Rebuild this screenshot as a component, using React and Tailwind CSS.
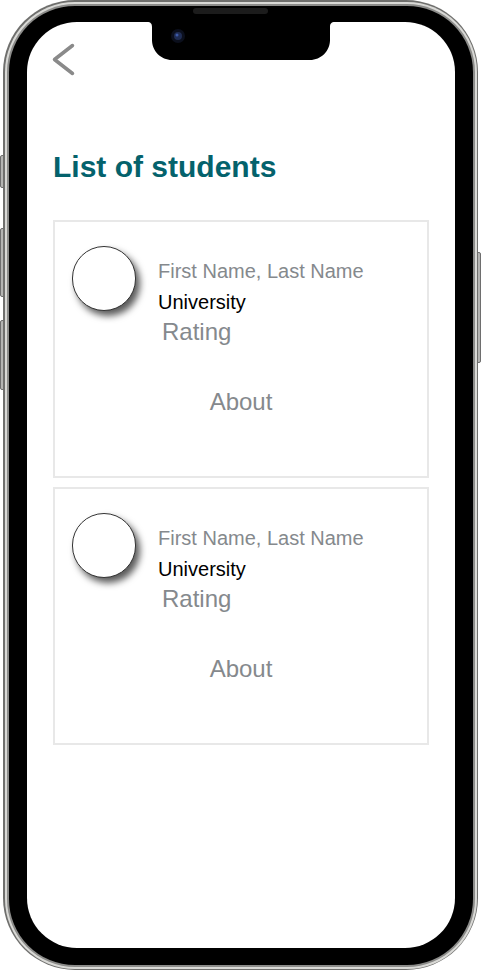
import React from "react";

const students = [
  { name: "First Name, Last Name", university: "University", rating: "Rating" },
  { name: "First Name, Last Name", university: "University", rating: "Rating" },
];

function StudentCard({ student }) {
  return (
    <div className="h-[258px] border-2 border-[#e8e8e8] bg-white pt-[24px] pl-[17px]">
      <div className="flex items-start">
        <div className="w-[64px] h-[65px] shrink-0 rounded-full border border-[#333] bg-white shadow-[4px_5px_7px_rgba(0,0,0,0.65)]" />
        <div className="ml-[22px] mt-[15px] flex flex-col">
          <span className="text-[20px] leading-none text-[#85898d]">{student.name}</span>
          <span className="mt-[11px] text-[20px] leading-none text-black">{student.university}</span>
          <span className="mt-[8px] ml-[4px] text-[24px] leading-none text-[#85898d]">{student.rating}</span>
        </div>
      </div>
      <div className="mt-[46px] pr-[17px] text-center text-[24px] leading-none text-[#85898d]">About</div>
    </div>
  );
}

export default function App() {
  return (
    <div className="relative w-[481px] h-[972px] bg-white font-['Liberation_Sans',Arial,sans-serif]">
      {/* side buttons */}
      <div className="absolute left-0 top-[155px] w-[5px] h-[33px] rounded-l-[2px] bg-[#b5b5b3] border border-[#6e6e6e]" />
      <div className="absolute left-0 top-[228px] w-[5px] h-[69px] rounded-l-[2px] bg-[#b5b5b3] border border-[#6e6e6e]" />
      <div className="absolute left-0 top-[320px] w-[5px] h-[70px] rounded-l-[2px] bg-[#b5b5b3] border border-[#6e6e6e]" />
      <div className="absolute right-0 top-[252px] w-[5px] h-[111px] rounded-r-[2px] bg-[#b5b5b3] border border-[#6e6e6e]" />

      <div className="relative ml-[3px] w-[475px] h-[970px] rounded-[72px] bg-[#6f6f6d] p-[1.5px]">
        <div className="h-full rounded-[70px] bg-[#d9d9d6] p-[2px]">
          <div className="h-full rounded-[68px] bg-[#8c8c8a] p-[2px]">
            <div className="relative h-full rounded-[66px] bg-black pl-[18.5px] pr-[17.5px] pt-[16.5px] pb-[16.5px]">
              {/* speaker */}
              <div className="absolute left-[184.5px] top-[2.5px] w-[75px] h-[6px] rounded-full bg-[#1c1c1c]" />

              <div className="relative h-full rounded-[50px] bg-white overflow-hidden px-[26px]">
                {/* notch */}
                <svg className="absolute left-[120px] top-0" width="188" height="38" viewBox="0 0 188 38">
                  <path d="M0,0 H188 C184,0 183,2 183,5 V18 C183,29 174,38 163,38 H25 C14,38 5,29 5,18 V5 C5,2 4,0 0,0 Z" fill="#000" />
                  <circle cx="31" cy="14" r="7" fill="#0b0f1c" />
                  <circle cx="31" cy="14" r="4" fill="#1f2c52" />
                  <circle cx="30" cy="13" r="1.5" fill="#3d5aa8" />
                </svg>

                <svg className="ml-[-3px] mt-[18px] block" width="28" height="40" viewBox="0 0 28 40">
                  <polyline points="22.5,5.5 4.5,19.5 22.5,33.5" fill="none" stroke="#8a8a8a" strokeWidth="3.5" strokeLinecap="round" strokeLinejoin="round" />
                </svg>

                <h1 className="mt-[72px] text-[30px] font-bold leading-none text-[#04626c]">List of students</h1>

                <div className="mt-[38px] flex flex-col gap-[9px]">
                  {students.map((s, i) => (
                    <StudentCard key={i} student={s} />
                  ))}
                </div>
              </div>
            </div>
          </div>
        </div>
      </div>
    </div>
  );
}
